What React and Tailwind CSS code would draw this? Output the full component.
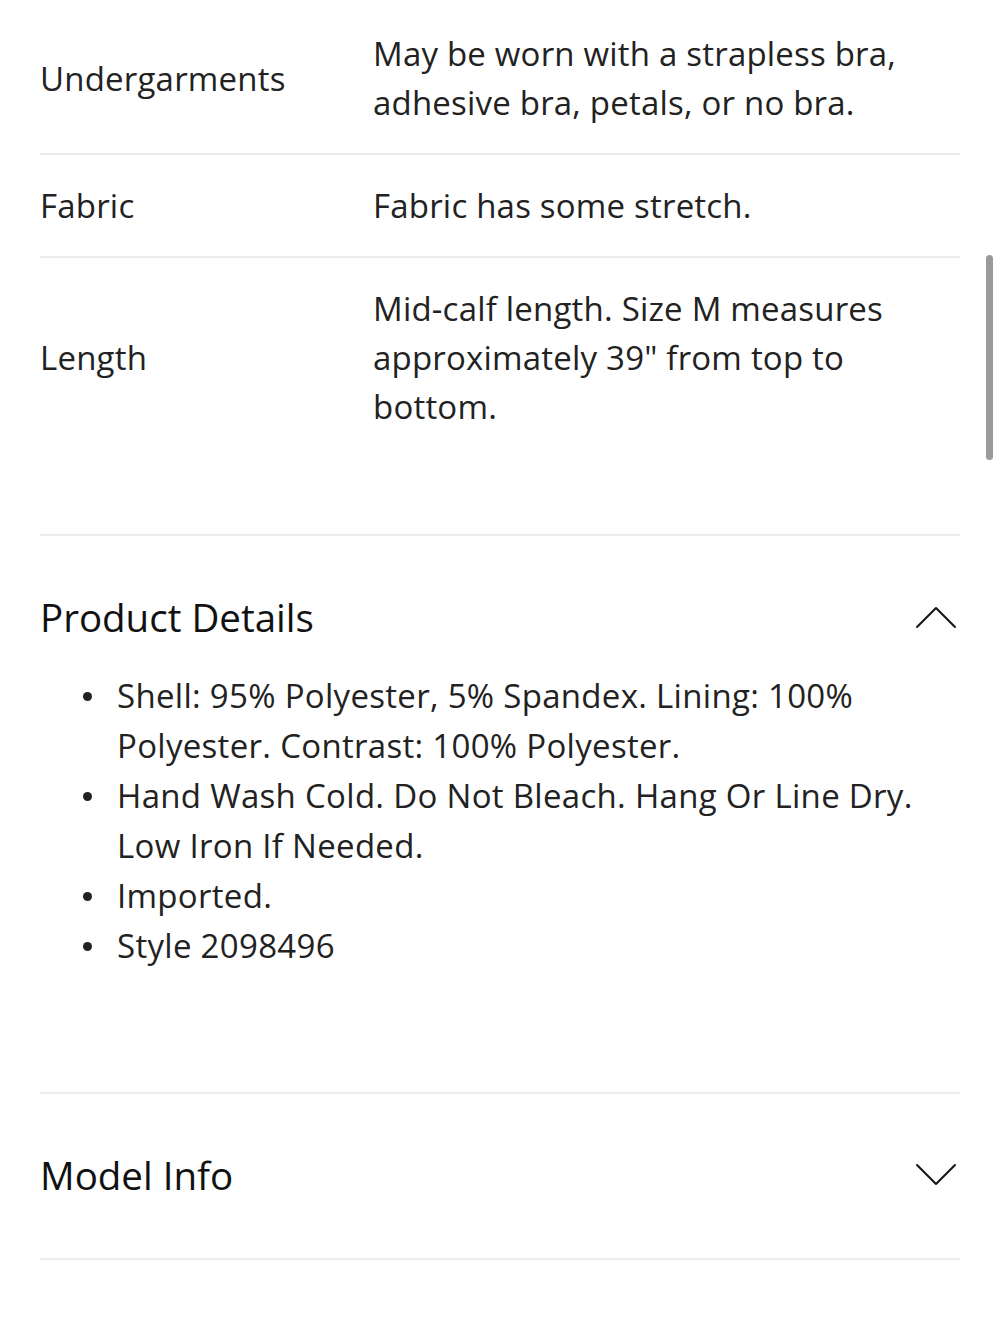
import React from "react";

const specs = [
  { label: "Undergarments", value: "May be worn with a strapless bra, adhesive bra, petals, or no bra." },
  { label: "Fabric", value: "Fabric has some stretch." },
  { label: "Length", value: 'Mid-calf length. Size M measures approximately 39" from top to bottom.' },
];

const details = [
  "Shell: 95% Polyester, 5% Spandex. Lining: 100% Polyester. Contrast: 100% Polyester.",
  "Hand Wash Cold. Do Not Bleach. Hang Or Line Dry. Low Iron If Needed.",
  "Imported.",
  "Style 2098496",
];

function Chevron({ up }) {
  return (
    <svg width="42" height="24" viewBox="0 0 42 24" fill="none" stroke="#111" strokeWidth="2" strokeLinecap="round" strokeLinejoin="round" className="mr-[3px]">
      {up ? <path d="M2 22 L21 3 L40 22" /> : <path d="M2 2 L21 21 L40 2" />}
    </svg>
  );
}

export default function App() {
  return (
    <div className="relative w-[1000px] h-[1333px] bg-white overflow-hidden font-['Open_Sans',sans-serif] text-[#222]">
      {/* scroll indicator */}
      <div className="absolute right-[7px] top-[255px] w-[7px] h-[205px] rounded-full bg-[#9a9a9a]" />

      <div className="px-[40px] pt-[3px]">
        {/* size & fit table */}
        <div>
          {specs.map((row, i) => (
            <div
              key={row.label}
              className={`grid grid-cols-[333px_1fr] items-center py-[26px] ${i < specs.length - 1 ? "border-b-2 border-[#ececec]" : ""}`}
            >
              <div className="text-[33px] leading-[49px] tracking-[0.2px]">{row.label}</div>
              <div className="text-[33px] leading-[49px] tracking-[0.2px] max-w-[545px]">{row.value}</div>
            </div>
          ))}
        </div>

        <div className="h-[79px] border-b-2 border-[#ececec]" />

        {/* product details */}
        <div className="border-b-2 border-[#ececec]">
          <button className="w-full flex items-center justify-between pt-[56px] pb-[29px]">
            <span className="text-[38.5px] leading-[50px] text-[#111]">Product Details</span>
            <Chevron up />
          </button>
          <ul className="pb-[121px]">
            {details.map((d) => (
              <li key={d} className="flex text-[33px] leading-[50px] tracking-[0.3px]">
                <span className="w-[77px] shrink-0 flex items-center h-[50px] pl-[43px]">
                  <span className="w-[9px] h-[9px] rounded-full bg-[#222]" />
                </span>
                <span className="max-w-[830px]">{d}</span>
              </li>
            ))}
          </ul>
        </div>

        {/* model info */}
        <div className="border-b-2 border-[#ececec]">
          <button className="w-full flex items-center justify-between pt-[56px] pb-[58px]">
            <span className="text-[38.5px] leading-[50px] text-[#111]">Model Info</span>
            <Chevron />
          </button>
        </div>
      </div>
    </div>
  );
}
